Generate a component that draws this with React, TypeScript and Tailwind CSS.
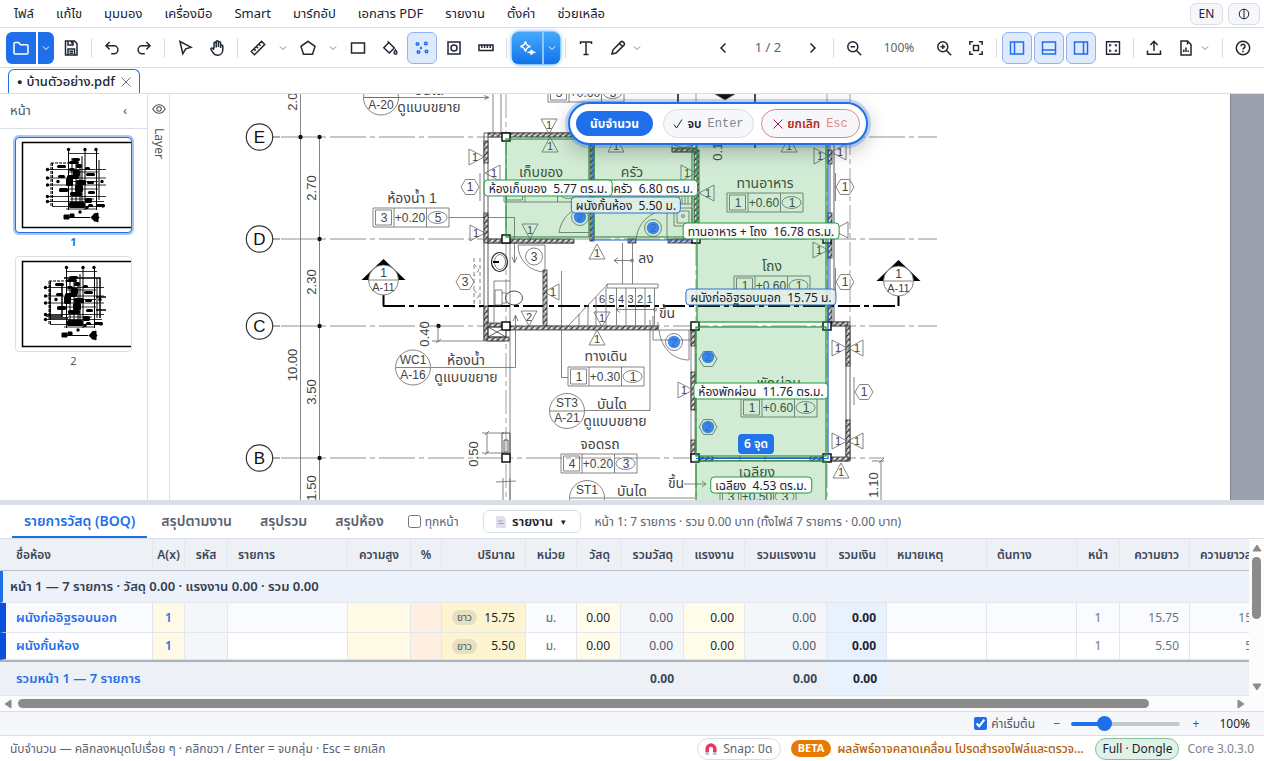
import { useState } from 'react';
import type { ReactNode } from 'react';
import clsx from 'clsx';

const MENU = ['ไฟล์', 'แก้ไข', 'มุมมอง', 'เครื่องมือ', 'Smart', 'มาร์กอัป', 'เอกสาร PDF', 'รายงาน', 'ตั้งค่า', 'ช่วยเหลือ'];

/* ---------- icons (18px grid) ---------- */

const ICONS: Record<string, ReactNode> = {
  folder: <path d="M2 14V4.5a1 1 0 0 1 1-1h3.6l1.8 2.2H15a1 1 0 0 1 1 1V14a1 1 0 0 1-1 1H3a1 1 0 0 1-1-1Z" />,
  save: <path d="M3.5 2h9L15 4.5V16H3.5ZM6 2v4h5V2M9.5 2.5v2M6 16v-6h6.5v6M7.5 12.2H11M7.5 14.2H11" />,
  undo: <path d="M6.6 10.5 3 6.8l3.6-3.7M3.2 6.8h7.7a4 4 0 0 1 0 8H8.2" />,
  redo: <path d="m11.4 10.5 3.6-3.7-3.6-3.7M14.8 6.8H7.1a4 4 0 0 0 0 8h2.7" />,
  cursor: <path d="m4 2.5 2.8 12.2 3-4.9 5.2-1.6Z" />,
  hand: (
    <path d="M6 9.5V4.2a1.1 1.1 0 0 1 2.2 0v4.300M8.200 8V2.900a1.100 1.100 0 0 1 2.200 0V8M10.400 8V3.800a1.100 1.100 0 0 1 2.200 0V9M12.600 7a1.100 1.100 0 0 1 2.200 0v3.500c0 3.300-2 5.700-5.100 5.700-2.500 0-3.700-1-4.900-2.900L3 10.400c-.5-1 .8-1.900 1.600-1.100L6 10.800" />
  ),
  ruler: <path d="M2.300 12.500 12.500 2.300l3.200 3.200L5.500 15.700ZM5 9.900l1.700 1.700M7.400 7.500l1.700 1.700M9.800 5.100l1.700 1.700" />,
  pentagon: <path d="M9 2.300 16 7.400 13.500 15.300H4.500L2 7.400Z" />,
  rect: <path d="M2.500 4h13v10h-13Z" />,
  paint: (
    <>
      <path d="m7.800 3.500 5.500 5.500-5 5-5.500-5.200ZM7.800 3.500 6.600 2.300" />
      <path d="M14.500 10.800c1 1.500 1.400 2.200 1.400 3a1.400 1.400 0 0 1-2.800 0c0-.8.400-1.500 1.400-3Z" />
    </>
  ),
  count: (
    <>
      <circle cx="4.500" cy="5" r="1.300" />
      <circle cx="12.800" cy="4.500" r="1.300" />
      <circle cx="8" cy="9" r=".5" />
      <circle cx="5.500" cy="13" r="1.300" />
      <circle cx="13.500" cy="12.500" r="1.300" />
    </>
  ),
  hole: (
    <>
      <path d="M3 3h12v12H3Z" />
      <circle cx="9" cy="9" r="3" />
    </>
  ),
  scale: <path d="M2 6h14v5.500H2ZM4.800 6v3M7.600 6v3M10.400 6v3M13.200 6v3" />,
  text: <path d="M3.500 5V3h11v2M9 3v12.500M6.500 15.500h5" />,
  pencil: <path d="m3 15 .9-4 8-8.100a1.500 1.500 0 0 1 2.100 0l1 1a1.500 1.500 0 0 1 0 2.200L7 14.100ZM10.500 4.500l3 3" />,
  prev: <path d="M11.500 4.500 7 9l4.500 4.500" />,
  next: <path d="M6.500 4.500 11 9l-4.500 4.500" />,
  zoomOut: (
    <>
      <circle cx="7.800" cy="7.800" r="5" />
      <path d="m11.500 11.500 4.700 4.700M5.500 7.800h4.600" />
    </>
  ),
  zoomIn: (
    <>
      <circle cx="7.800" cy="7.800" r="5" />
      <path d="m11.500 11.500 4.700 4.700M5.500 7.800h4.600M7.800 5.500v4.600" />
    </>
  ),
  fit: <path d="M2.800 6V2.800H6M12 2.800h3.200V6M15.200 12v3.200H12M6 15.200H2.800V12M6.500 6.500h5v5h-5Z" />,
  left: <path d="M2.500 3h13v12h-13ZM6.500 3v12" />,
  bottom: <path d="M2.500 3h13v12h-13ZM2.500 11h13" />,
  right: <path d="M2.500 3h13v12h-13ZM11.500 3v12" />,
  full: <path d="M2.500 2.800h13v12.400h-13ZM5.800 7.500V6h1.500M10.700 6h1.500v1.500M12.200 10.500V12h-1.500M7.300 12H5.800v-1.500" strokeWidth="1.400" />,
  upload: <path d="M9 12V2.500M5.300 6 9 2.300 12.700 6M2.500 11.500v3.700h13v-3.700" />,
  report: <path d="M4 2h6.500L14 5.500V16H4ZM10.500 2v3.500M6.800 13v-2.500M9 13V8.500M11.200 13v-1.500" />,
  help: (
    <>
      <circle cx="9" cy="9" r="6.700" />
      <path d="M7 7.300a2 2 0 1 1 3 1.700c-.7.400-1 .8-1 1.500M9 11.800v1.400" />
    </>
  ),
  sparkle: (
    <>
      <path d="M7.500 2.500c.6 3.200 1.500 4.300 5 5-3.500.8-4.400 1.800-5 5-.7-3.200-1.600-4.200-5-5 3.400-.7 4.300-1.800 5-5Z" />
      <path d="M13.500 10.800c.3 1.500.8 2 2.300 2.400-1.500.4-2 .9-2.300 2.400-.3-1.500-.8-2-2.300-2.400 1.500-.4 2-.9 2.300-2.400Z" fill="currentColor" />
    </>
  ),
};

function Icon({ name }: { name: string }) {
  return (
    <svg viewBox="0 0 18 18" className="size-[18px]" fill="none" stroke="currentColor" strokeWidth="1.500" aria-hidden="true">
      {ICONS[name]}
    </svg>
  );
}

function Tool({ name, label, active }: { name: string; label: string; active?: boolean }) {
  return (
    <button
      aria-label={label}
      aria-pressed={active}
      className={clsx(
        'flex h-8 w-[30px] shrink-0 items-center justify-center rounded-md border',
        active ? 'border-[#8db4f5] bg-[#dfe9fc] text-[#1f6feb]' : 'border-transparent text-[#1f2733]'
      )}
    >
      <Icon name={name} />
    </button>
  );
}

function Chevron({ label, start, className }: { label: string; start?: boolean; className?: string }) {
  return (
    <button
      aria-label={label}
      className={clsx('flex h-8 w-4 shrink-0 items-center', start ? '-ml-0.5 justify-start' : 'justify-center', className ?? 'text-[#7d8590]')}
    >
      <svg viewBox="0 0 8 8" className="size-2" fill="none" stroke="currentColor" strokeWidth="1">
        <path d="M1 2.500 4 5.500 7 2.500" />
      </svg>
    </button>
  );
}

const Sep = () => <div className="mx-[3px] h-5 w-px shrink-0 bg-[#d8dde3]" />;

/* ---------- floor plan ---------- */

type Dir = 'up' | 'down' | 'left' | 'right';
const TRI: Record<Dir, string> = {
  up: 'M0 -9 8 6H-8Z',
  down: 'M0 9 8 -6H-8Z',
  left: 'M-9 0 6 -8V8Z',
  right: 'M9 0 -6 -8V8Z',
};

const TAGS: [number, number, Dir, string?][] = [
  [475, 157, 'right'], [476, 233, 'right'], [494, 173, 'left'], [530, 230, 'down'], [549, 125, 'down'],
  [550, 146, 'up'], [616, 146, 'up'], [687, 173, 'right'], [708, 193, 'left'], [820, 156, 'right'],
  [840, 152, 'left'], [789, 146, 'up'], [819, 250, 'right'], [842, 230, 'left', ''], [597, 339, 'up'],
  [602, 318, 'down'], [553, 292, 'left'], [597, 253, 'up'], [529, 317, 'down', '2'], [684, 390, 'right'],
  [838, 348, 'right'], [857, 348, 'left'], [838, 441, 'right'], [857, 441, 'left'], [841, 472, 'up'],
];

const HEXES: [number, number, string][] = [
  [470, 187, '1'], [465, 282, '3'], [845, 187, '1'], [845, 282, '1'], [864, 392, '1'], [708, 359, ''], [708, 427, ''],
];

const SPECS: [number, number, string, string, string][] = [
  [373, 208, '3', '+0.20', '5'], [727, 193, '1', '+0.60', '1'], [734, 276, '1', '+0.60', '1'],
  [568, 367, '1', '+0.30', '1'], [561, 454, '4', '+0.20', '3'], [741, 398, '1', '+0.60', '1'],
  [720, 487, '3', '+0.50', '3'], [548, 83, '3', '+0.60', '3'], [504, 183, '', '', ''], [600, 183, '', '', ''],
];

const NAMES: [number, number, string][] = [
  [429, 112, 'ดูแบบขยาย'], [429, 95, 'บันได'], [412, 203, 'ห้องน้ำ 1'], [541, 177, 'เก็บของ'], [632, 177, 'ครัว'],
  [765, 188, 'ทานอาหาร'], [772, 271, 'โถง'], [606, 361, 'ทางเดิน'], [612, 409, 'บันได'], [615, 426, 'ดูแบบขยาย'],
  [600, 449, 'จอดรถ'], [632, 496, 'บันได'], [757, 477, 'เฉลียง'], [676, 488, 'ขึ้น'], [667, 318, 'ขึ้น'],
  [646, 263, 'ลง'], [779, 388, 'พักผ่อน'], [466, 365, 'ห้องน้ำ'], [466, 382, 'ดูแบบขยาย'],
];

const DIMS: [number, number, string][] = [
  [293, 98, '2.00'], [312, 188, '2.70'], [312, 282, '2.30'], [293, 365, '10.00'], [312, 392, '3.50'],
  [312, 488, '1.50'], [425, 334, '0.40'], [474, 454, '0.50'], [874, 485, '1.10'], [718, 148, '0.10'],
];

// x, y, width, height of hatched masonry
const WALLS: [number, number, number, number][] = [
  [488, 133, 208, 4], [484, 141, 4, 22], [484, 213, 4, 30], [488, 239, 86, 4], [590, 137, 4, 104],
  [628, 239, 8, 4], [668, 239, 30, 4], [694, 150, 5, 90], [543, 270, 4, 58], [507, 326, 151, 4],
  [484, 306, 4, 34], [487, 323, 22, 4], [487, 337, 22, 4], [691, 330, 4, 16], [691, 372, 4, 38],
  [691, 440, 4, 18], [828, 150, 4, 14], [828, 213, 4, 45], [828, 306, 4, 20], [832, 322, 16, 4],
  [846, 326, 4, 40], [846, 420, 4, 40], [832, 457, 16, 4], [699, 457, 14, 4], [810, 457, 16, 4], [681, 133, 17, 4], [672, 148, 24, 4],
];

const COLUMNS: [number, number][] = [
  [506, 137], [506, 239], [506, 326], [506, 458], [695, 326], [827, 326], [695, 458], [827, 458], [827, 239], [696, 239],
];

const ROOMS: [number, number, number, number][] = [
  [506, 139, 83, 98], [594, 139, 98, 98], [697, 139, 129, 183], [696, 327, 130, 129], [696, 461, 130, 50],
];

const COUNTS: [number, number][] = [[580, 217], [653, 228], [674, 342], [708, 357], [708, 427]];

function DetailBubble({ x, y, top, bottom }: { x: number; y: number; top: string; bottom: string }) {
  return (
    <g>
      <circle cx={x} cy={y} r="17.500" fill="none" />
      <path d={`M${x - 17} ${y}h34`} />
      <text x={x} y={y - 4} fontSize="12">{top}</text>
      <text x={x} y={y + 11} fontSize="12">{bottom}</text>
    </g>
  );
}

function SectionMark({ x, y }: { x: number; y: number }) {
  return (
    <g>
      <path d={`M${x} ${y - 21}l22 21h-44Z`} fill="#000" stroke="none" />
      <circle cx={x} cy={y} r="15" fill="#fff" />
      <path d={`M${x - 15} ${y}h30`} />
      <text x={x} y={y - 3} fontSize="12">1</text>
      <text x={x} y={y + 11} fontSize="11">A-11</text>
    </g>
  );
}

function FloorPlan() {
  return (
    <svg
      viewBox="170 94 1061 406"
      width="1061"
      height="406"
      className="block shrink-0 [&_text]:fill-[#444] [&_text]:stroke-none"
      fill="none"
      stroke="#666"
      strokeWidth="0.800"
      textAnchor="middle"
      fontFamily='"Liberation Sans", "Noto Sans Thai", sans-serif'
      aria-label="แปลนพื้น"
    >
      <defs>
        <pattern id="hatch" width="4" height="4" patternUnits="userSpaceOnUse" patternTransform="rotate(45)">
          <rect width="4" height="4" fill="#e6e6e6" />
          <path d="M0 0v4" stroke="#333" strokeWidth="2" />
        </pattern>
      </defs>

      {/* grid lines */}
      {[137, 239, 326, 458].map((y) => (
        <path key={y} d={`M281 ${y}H${y === 458 ? 884 : 937}`} strokeDasharray="36 4 5 4" stroke="#777" />
      ))}
      <path d="M506 94V500M696 94V500M827 94V500M850 94V322" strokeDasharray="24 4 5 4" stroke="#888" />
      <path d="M300.500 94V500M319.500 137V500M510 243V500M493 94V133M501 94V133" />
      {[[300, 137], [319, 137], [319, 239], [319, 326], [319, 458], [438, 326]].map(([x, y]) => (
        <circle key={`${x}-${y}`} cx={x + 0.5} cy={y} r="2.200" fill="#111" stroke="none" />
      ))}
      {[['E', 137], ['D', 239], ['C', 326], ['B', 458]].map(([name, y]) => (
        <g key={name}>
          <circle cx="259.500" cy={y} r="13.200" stroke="#333" strokeWidth="1.200" />
          <path d={`M273 ${y}h7`} stroke="#333" />
          <text x="259.500" y={Number(y) + 6} fontSize="17" className="fill-[#111]!">{name}</text>
        </g>
      ))}
      {DIMS.map(([x, y, t]) => (
        <text key={`${x}-${y}`} x={x} y={y} fontSize="13" transform={`rotate(-90 ${x} ${y})`} dy="4">{t}</text>
      ))}

      {/* leaders and dimension ticks */}
      <path d="M364 97.500H488M484 95.500l5 2-5 2M449 217.500h65.500V262M512 257l2.500 6 2.500-6M431 367.500h84.500V316M513 321l2.500-6 2.500 6" />
      <path d="M585 410.500h65V320M605 498h90M568 377.500h-6.500V271M684 484h22M702 481l4 3-4 3" />
      <path d="M438 326v16M432 341h74M436 343l5-4M487 433v20M482 433h22M482 453h22M485 435l4-4M485 455l4-4M503 478v22M510 478v22M496 482l20-1M881 461v40M872 461h12M879 463l5-5" />
      <path d="M655 309.500H616l4-3M616 309.500l4 3M632 260.500H614l4-3M614 260.500l4 3M622.500 243v41M632.500 243v41" />
      <circle cx="655" cy="309.500" r="1.500" />
      <circle cx="632" cy="260.500" r="1.500" />

      {/* thick section line */}
      <path d="M383.500 295V306M898.500 295V306" stroke="#000" strokeWidth="2" />
      <path d="M383 306H899" stroke="#000" strokeWidth="2" strokeDasharray="22 4 5 4" />

      {/* wall outlines */}
      <path d="M484 133V341M488 137V323M484 133H698M488 243H574M830 145V322M834 145V322M846 326V461M850 322V461M832 322H850M830 461H850" stroke="#333" />
      <path d="M691 330V458M695 330V458M658 322V330M713 457.500H810M713 460.500H810M740 456v5M765 456v5" />
      {WALLS.map(([x, y, w, h]) => (
        <rect key={`${x}-${y}`} x={x} y={y} width={w} height={h} fill="url(#hatch)" stroke="#333" />
      ))}
      <path d="M488 327h18v10h-18ZM488 327l18 10M506 327l-18 10M502 433h8v20h-8ZM504 440h4v12h-4Z" stroke="#333" />

      {/* doors and windows */}
      <path d="M559 232.500A32 32 0 0 1 589 205M559 232.500h30M636 240A32 32 0 0 1 667 210V240M518 245h27v27A27 27 0 0 1 518 245" />
      <path d="M659 330c2 18 14 30 30 30V330M659 330h32M653 316v24h38" />
      <path d="M480 173v28M835.500 173v28M835.500 268v28M854 377v28" />
      <path d="M474 258v50M480 258v50M474 264l5 6-5 6M474 290l5 6-5 6" strokeDasharray="4 3" />
      <circle cx="534" cy="256.500" r="8.500" />
      <text x="534" y="261" fontSize="12">3</text>
      {COUNTS.slice(0, 3).map(([x, y]) => <circle key={x} cx={x} cy={y} r="8.500" />)}

      {/* sanitary fixtures */}
      <ellipse cx="499.500" cy="262" rx="8" ry="9.500" stroke="#222" strokeWidth="1.200" />
      <ellipse cx="500" cy="262" rx="5.500" ry="7.500" />
      <path d="M493 262h6" stroke="#000" strokeWidth="2" />
      <path d="M495 290h7v15h-7ZM502 293h5M502 303h5M494 281v42M494 281h16" />
      <ellipse cx="514" cy="298" rx="8.500" ry="7" stroke="#222" />
      <path d="M674 208h18v18h-18ZM677 211h12v12h-12ZM676 192h16v12h-16M679 192v12M682 192v12M685 192v12M688 192v12M672 152h24v-8h-24ZM672 152l24-8M672 144l24 8" />
      <circle cx="683" cy="216" r="1.500" />

      {/* stairs */}
      <path d="M607 284h51v4h-51ZM568 326 608 284M606 288V325M616.500 288V325M626 288V325M635.500 288V325M645 288V325M654.500 288V325M596 297V325M588 305V325M579 314V325" />
      {[6, 5, 4, 3, 2, 1].map((n, i) => (
        <text key={n} x={602 + i * 9.500} y="303" fontSize="11">{n}</text>
      ))}

      {/* strokes coming in from the upper part of the sheet */}
      <path d="M678 94v40M755 94v54" stroke="#111" strokeWidth="1.500" />
      <path d="M715 94l20 0-10 6Z" fill="#111" />

      {COLUMNS.map(([x, y]) => (
        <rect key={`${x}-${y}`} x={x - 4} y={y - 4} width="8" height="8" fill="#fff" stroke="#111" strokeWidth="1.500" />
      ))}

      {SPECS.map(([x, y, a, b, c]) => (
        <g key={`${x}-${y}`}>
          <path d={`M${x} ${y}h76v19h-76ZM${x + 2.500} ${y + 2}h16v15h-16ZM${x + 21} ${y}v19M${x + 53.500} ${y}v19`} />
          <ellipse cx={x + 64.500} cy={y + 9.500} rx="9.500" ry="6" />
          {b && (
            <>
              <text x={x + 11} y={y + 14} fontSize="12">{a}</text>
              <text x={x + 37} y={y + 14} fontSize="12">{b}</text>
              <text x={x + 65} y={y + 14} fontSize="12">{c}</text>
            </>
          )}
        </g>
      ))}
      {TAGS.map(([x, y, dir, n = '1']) => (
        <g key={`${x}-${y}`} transform={`translate(${x} ${y})`}>
          <path d={TRI[dir]} />
          {n && <text y="4" fontSize="11">{n}</text>}
        </g>
      ))}
      {HEXES.map(([x, y, n]) => (
        <g key={`${x}-${y}`} transform={`translate(${x} ${y})`}>
          <path d="M-9 0-4.500-7.500h9L9 0 4.500 7.500h-9Z" />
          {n && <text y="4" fontSize="12">{n}</text>}
        </g>
      ))}

      <DetailBubble x={381} y={97.500} top="ST2" bottom="A-20" />
      <DetailBubble x={413} y={367.500} top="WC1" bottom="A-16" />
      <DetailBubble x={567} y={411} top="ST3" bottom="A-21" />
      <DetailBubble x={587} y={498} top="ST1" bottom="A-19" />
      <SectionMark x={383.500} y={280} />
      <SectionMark x={898.500} y={281} />

      {NAMES.map(([x, y, t]) => (
        <text key={`${x}-${y}`} x={x} y={y} fontSize="14">{t}</text>
      ))}

      {/* measured areas, walls and counted points */}
      {ROOMS.map(([x, y, w, h]) => (
        <rect key={`${x}-${y}`} x={x} y={y} width={w} height={h} fill="#1a9b2e" fillOpacity="0.200" stroke="#1f9a3a" strokeWidth="1.200" />
      ))}
      <path d="M592 137V240H692M828 145V458.500H696" stroke="#1f5fd8" strokeWidth="1.200" />
      {COUNTS.map(([x, y]) => (
        <g key={x + y}>
          <text x={x} y={y + 4} fontSize="11">2</text>
          <circle cx={x} cy={y} r="6.200" fill="#2374e8" fillOpacity="0.850" stroke="none" />
        </g>
      ))}
    </svg>
  );
}

const LABELS = [
  { x: 473, y: 94, tone: 'green', text: 'ห้องครัว  6.80 ตร.ม.' },
  { x: 378, y: 94, tone: 'green', text: 'ห้องเก็บของ  5.77 ตร.ม.' },
  { x: 456, y: 111, tone: 'blue', text: 'ผนังกั้นห้อง  5.50 ม.' },
  { x: 591, y: 137, tone: 'green', text: 'ทานอาหาร + โถง  16.78 ตร.ม.' },
  { x: 591, y: 203, tone: 'blue', text: 'ผนังก่ออิฐรอบนอก  15.75 ม.' },
  { x: 591, y: 297, tone: 'green', text: 'ห้องพักผ่อน  11.76 ตร.ม.' },
  { x: 591, y: 391, tone: 'green', text: 'เฉลียง  4.53 ตร.ม.' },
];

function Canvas() {
  return (
    <div className="relative min-w-0 flex-1 overflow-hidden bg-[#9aa1ac]">
      <div className="w-[1061px] border-r border-[#7f8691] bg-white">
        <FloorPlan />
      </div>
      {LABELS.map((l) => (
        <span
          key={l.text}
          className={clsx(
            'absolute flex h-[17px] -translate-x-1/2 -translate-y-1/2 items-center rounded border px-1 text-xs whitespace-pre text-[#1b2230]',
            l.tone === 'green' ? 'border-[#1f9a3a] bg-white/95' : 'border-[#2f6fd6] bg-[#e3f0e8]/90'
          )}
          style={{ left: l.x, top: l.y }}
        >
          {l.text}
        </span>
      ))}
      <span className="absolute top-[340px] left-[568px] flex h-5 items-center rounded-sm bg-[#2374e8] px-1.5 text-xs font-semibold text-white">6 จุด</span>

      <div className="absolute top-2 left-[398px] flex h-[43px] items-center gap-2 rounded-full border-2 border-[#1f6feb] bg-white px-1.5 text-xs shadow-[0_0_0_3px_rgba(31,111,235,0.25),0_6px_20px_rgba(0,0,0,0.25)]">
        <span className="mr-0.5 flex h-[25px] w-[77px] items-center justify-center rounded-full bg-[#1f6feb] font-bold whitespace-nowrap text-white">นับจำนวน</span>
        <button className="flex h-[29px] w-[91px] items-center justify-center gap-1 rounded-full border border-[#d8dde3] bg-[#f5f7fa] font-semibold whitespace-nowrap text-[#1b2230]">
          <svg viewBox="0 0 10 10" className="size-2.5" fill="none" stroke="currentColor"><path d="m1 5.500 2.500 3.500L9 .5" /></svg>
          จบ <kbd className="ml-0.5 font-['Liberation_Mono',monospace] text-xs font-normal text-[#7d8590]">Enter</kbd>
        </button>
        <button className="-ml-px flex h-[29px] w-[99px] items-center justify-center gap-1 rounded-full border border-[#d98a87] bg-[#f5f7fa] font-semibold whitespace-nowrap text-[#b3261e]">
          <svg viewBox="0 0 10 10" className="size-2.5" fill="none" stroke="#c2185b"><path d="m.5.500 9 9M9.500.500l-9 9" /></svg>
          ยกเลิก <kbd className="ml-0.5 font-['Liberation_Mono',monospace] text-xs font-normal text-[#e08a80]">Esc</kbd>
        </button>
      </div>
    </div>
  );
}

/* ---------- page thumbnails ---------- */

const BLOBS: [number, number, number, number][] = [
  [53, 23, 10, 3], [56, 20, 8, 3], [60, 26, 6, 4], [57, 32, 7, 6], [41, 27, 9, 3], [51, 37, 12, 4], [70, 35, 9, 3],
  [50, 40, 7, 8], [60, 42, 10, 5], [71, 43, 7, 3], [42, 37, 7, 3], [43, 50, 9, 4], [59, 47, 8, 7], [72, 53, 7, 3], [53, 64, 16, 6],
  [69, 60, 7, 5], [69, 29, 5, 3], [72, 66, 5, 3], [80, 66, 9, 3], [54, 54, 12, 4], [53, 30, 6, 3],
];

const NODES: [number, number][] = [
  [52.5, 11.5], [69, 11.5], [80, 11.5], [31.5, 31.5], [31.5, 40], [31.5, 47], [31.5, 58.5], [31.5, 63.5],
  [86, 43.5], [42, 43.5], [64, 74], [71, 69.5], [87, 68],
];

function Thumb({ page }: { page: number }) {
  return (
    <svg viewBox="0 0 115 94" className="block h-[94px] w-full" preserveAspectRatio="xMinYMin slice" aria-hidden="true">
      <path d="M115 4.500H6.500v85H115" fill="none" stroke="#000" strokeWidth="1.500" />
      <g transform={page === 1 ? undefined : 'translate(-2 -1)'} stroke="#000" fill="none">
        <path d="M52.500 12v60M69 12v60M80.500 12v60M56 20v50M60 20v50M64 26v44M83 22v40M66 18v50" />
        <path d="M31 31.500H90M31 40H90M31 47H90M31 58.500H90M31 63.500H88M52 15.500H83M36 68.500H86M52 34h30M50 51h32M52 43.500h30M54 61h24M50 71h30" strokeWidth="0.800" />
        <path d="M36.500 25v44M35 25h20M35 25v44" strokeDasharray="3 1" />
        {page === 2 && <path d="M36 27v35h18M48 27v34M32 60h16M50 22h36v40M82 41h10M82 54h10" strokeWidth="1.500" />}
        {BLOBS.map(([x, y, w, h]) => (
          <rect key={`${x}-${y}`} x={x} y={y} width={w} height={h} rx="1.500" fill="#000" stroke="none" />
        ))}
        <path d="M50 79.500h24" />
        <path d="M48 77h5v4h-5ZM54 76h4v3h-4Z" fill="#000" />
        {NODES.map(([x, y]) => (
          <circle key={`${x}-${y}`} cx={x} cy={y} r="1.700" fill="#000" stroke="none" />
        ))}
        <path d="M78 76l4-1 0 9-4-2Zm-3 3.500 4-4 4 4-4 4Z" fill="#000" strokeWidth="1" />
      </g>
    </svg>
  );
}

/* ---------- BOQ table ---------- */

const COLS: { w: number; name: string; cls: string; head?: string }[] = [
  { w: 153, name: 'ชื่อห้อง', cls: 'text-left pl-4' },
  { w: 32, name: 'A(x)', cls: 'text-center' },
  { w: 43, name: 'รหัส', cls: 'text-center' },
  { w: 120, name: 'รายการ', cls: 'text-left px-2.5' },
  { w: 63, name: 'ความสูง', cls: 'text-center' },
  { w: 31, name: '%', cls: 'text-center' },
  { w: 84, name: 'ปริมาณ', cls: 'text-right pr-2.5' },
  { w: 51, name: 'หน่วย', cls: 'text-center' },
  { w: 44, name: 'วัสดุ', cls: 'text-right pr-2.5' },
  { w: 63, name: 'รวมวัสดุ', cls: 'text-right pr-2.5' },
  { w: 61, name: 'แรงงาน', cls: 'text-right pr-2.5' },
  { w: 82, name: 'รวมแรงงาน', cls: 'text-right pr-2.5' },
  { w: 60, name: 'รวมเงิน', cls: 'text-right pr-2.5' },
  { w: 100, name: 'หมายเหตุ', cls: 'text-left px-2.5' },
  { w: 90, name: 'ต้นทาง', cls: 'text-left px-2.5' },
  { w: 43, name: 'หน้า', cls: 'text-center' },
  { w: 70, name: 'ความยาว', cls: 'text-right pr-2.5' },
  { w: 80, name: 'ความยาวสุทธิ', cls: 'text-left pl-2.5' },
];

const ROWS = [
  { name: 'ผนังก่ออิฐรอบนอก', qty: '15.75' },
  { name: 'ผนังกั้นห้อง', qty: '5.50' },
];

function BoqTable() {
  const cell = 'border-r border-b border-[#e3e7ed] overflow-hidden';
  return (
    <table className="w-[1270px] table-fixed border-separate border-spacing-0 text-xs whitespace-nowrap">
      <colgroup>
        {COLS.map((c) => <col key={c.name} style={{ width: c.w }} />)}
      </colgroup>
      <thead>
        <tr className="h-8 bg-[#edf0f5] text-[#3b4656]">
          {COLS.map((c) => (
            <th key={c.name} className={clsx('overflow-hidden border-r border-b border-r-[#e3e7ed] border-b-[#b9c0c9] font-semibold', c.cls)}>{c.name}</th>
          ))}
        </tr>
      </thead>
      <tbody>
        <tr className="h-8">
          <td colSpan={18} className="border-b border-l-3 border-b-[#e3e7ed] border-l-[#1f6feb] bg-[#edf1fa] pl-[7px] text-[13px] font-semibold text-[#333e4e]">
            หน้า 1 — 7 รายการ · วัสดุ 0.00 · แรงงาน 0.00 · รวม 0.00
          </td>
        </tr>
        {ROWS.map((r, i) => (
          <tr key={r.name} className={i ? 'h-[27px] bg-white' : 'h-[30px] bg-[#fafbfe]'}>
            <td className={clsx(cell, 'border-l-6 border-l-[#0a4fdc] pl-2.5 text-[13px] font-semibold text-[#1f6feb]')}>{r.name}</td>
            <td className={clsx(cell, 'bg-[#fffae6] text-center font-semibold text-[#1f6feb]')}>1</td>
            <td className={clsx(cell, 'bg-[#f4f6fa]')} />
            <td className={cell} />
            <td className={clsx(cell, 'bg-[#fffae6]')} />
            <td className={clsx(cell, 'bg-[#ffefe2]')} />
            <td className={clsx(cell, 'bg-[#fdf5cf] pr-2.5 text-right text-[#1b2230]')}>
              <span className="flex items-center justify-between pl-2.5">
                <span className="rounded-full bg-[#e6e0c0] px-[5px] text-[10px] leading-[15px] text-[#4c5666]">ยาว</span>
                {r.qty}
              </span>
            </td>
            <td className={clsx(cell, 'text-center text-[#5a6473]')}>ม.</td>
            <td className={clsx(cell, 'bg-[#fffcec] pr-2.5 text-right text-[#1b2230]')}>0.00</td>
            <td className={clsx(cell, 'bg-[#f4f6fa] pr-2.5 text-right text-[#4c5666]')}>0.00</td>
            <td className={clsx(cell, 'bg-[#fffcec] pr-2.5 text-right text-[#1b2230]')}>0.00</td>
            <td className={clsx(cell, 'bg-[#f4f6fa] pr-2.5 text-right text-[#4c5666]')}>0.00</td>
            <td className={clsx(cell, 'bg-[#e8f1fe] pr-2.5 text-right font-bold text-[#1b2230]')}>0.00</td>
            <td className={cell} />
            <td className={cell} />
            <td className={clsx(cell, 'text-center text-[#6b7480]')}>1</td>
            <td className={clsx(cell, 'pr-2.5 text-right text-[#6b7480]')}>{r.qty}</td>
            <td className={clsx(cell, 'pr-0 text-right text-[#6b7480]')}>{r.qty}</td>
          </tr>
        ))}
      </tbody>
      <tfoot>
        <tr className="h-9 bg-[#edf0f5] font-bold text-[#3b4656] [&>td]:border-t-2 [&>td]:border-b [&>td]:border-t-[#aab3bd] [&>td]:border-b-[#e3e7ed]">
          <td colSpan={9} className="pl-4 text-[13px] font-semibold text-[#1f6feb]">รวมหน้า 1 — 7 รายการ</td>
          <td className="pr-2.5 text-right">0.00</td>
          <td />
          <td className="pr-2.5 text-right">0.00</td>
          <td className="bg-[#e8f1fe] pr-2.5 text-right text-[#1b2230]">0.00</td>
          <td colSpan={5} />
        </tr>
      </tfoot>
    </table>
  );
}

function Arrow({ d }: { d: string }) {
  return (
    <svg viewBox="0 0 10 10" className="size-2.5 shrink-0" fill="#8b8b8b" stroke="#8b8b8b" strokeLinejoin="round" aria-hidden="true">
      <path d={d} />
    </svg>
  );
}

const MIN_ZOOM = 70;
const MAX_ZOOM = 180;

export default function App() {
  const [allPages, setAllPages] = useState(false);
  const [defaults, setDefaults] = useState(true);
  const [zoom, setZoom] = useState(100);
  const filled = ((zoom - MIN_ZOOM) / (MAX_ZOOM - MIN_ZOOM)) * 100;

  return (
    <main className="flex h-screen flex-col overflow-hidden bg-white font-['Noto_Sans','Noto_Sans_Thai',sans-serif] text-[#1b2230]">
      <header className="flex h-7 shrink-0 items-center border-b border-[#dadfe5] pr-1 pl-1 text-xs">
        <nav className="flex flex-1 gap-0.5 text-[13px]">
          {MENU.map((m) => <button key={m} className="px-2.5 whitespace-nowrap">{m}</button>)}
        </nav>
        <button className="mr-[5px] h-[22px] w-[33px] rounded-md border border-[#dadfe5] bg-[#f5f7fa]">EN</button>
        <button aria-label="ธีม" className="flex h-[22px] w-8 items-center justify-center rounded-md border border-[#dadfe5] bg-[#f5f7fa]">
          <svg viewBox="0 0 12 12" className="size-3" fill="none" stroke="currentColor"><circle cx="6" cy="6" r="4.800" /><path d="M6 1v10" /></svg>
        </button>
      </header>

      <div className="flex h-10 shrink-0 items-center gap-0.5 border-b border-[#dadfe5] px-1.5">
        <button aria-label="เปิด" className="flex h-8 w-[30px] shrink-0 items-center justify-center rounded-l-md bg-[#1f6feb] text-white"><Icon name="folder" /></button>
        <Chevron label="เปิดล่าสุด" className="rounded-r-md bg-[#1f6feb] text-white" />
        <Tool name="save" label="บันทึก" />
        <Sep />
        <Tool name="undo" label="เลิกทำ" />
        <Tool name="redo" label="ทำซ้ำ" />
        <Sep />
        <Tool name="cursor" label="เลือก" />
        <Tool name="hand" label="เลื่อน" />
        <Sep />
        <Tool name="ruler" label="วัดระยะ" />
        <Chevron label="ตัวเลือกวัดระยะ" />
        <Tool name="pentagon" label="วัดพื้นที่" />
        <Chevron label="ตัวเลือกวัดพื้นที่" />
        <Tool name="rect" label="สี่เหลี่ยม" />
        <Tool name="paint" label="เติมพื้นที่" />
        <Tool name="count" label="นับ" active />
        <Tool name="hole" label="ช่องเปิด" />
        <Tool name="scale" label="มาตราส่วน" />
        <Sep />
        <div className="flex shrink-0 gap-0.5 rounded-lg bg-[#8cc8fb] shadow-[0_0_0_1px_#8cc8fb,0_0_5px_#4da3ff]">
          <button aria-label="Smart" className="flex h-8 w-[30px] items-center justify-center rounded-l-md bg-linear-to-b from-[#45a9fb] to-[#1272ea] text-white"><Icon name="sparkle" /></button>
          <Chevron label="Smart เพิ่มเติม" className="rounded-r-md bg-linear-to-b from-[#45a9fb] to-[#1272ea] text-white" />
        </div>
        <Sep />
        <Tool name="text" label="ข้อความ" />
        <Tool name="pencil" label="วาด" />
        <Chevron label="ตัวเลือกวาด" start />
        <div className="flex-1" />
        <Tool name="prev" label="หน้าก่อน" />
        <span className="w-14 shrink-0 text-center text-[13px] text-[#5a6473]">1 / 2</span>
        <Tool name="next" label="หน้าถัดไป" />
        <Sep />
        <Tool name="zoomOut" label="ย่อ" />
        <span className="w-14 shrink-0 text-center text-xs text-[#5a6473]">100%</span>
        <Tool name="zoomIn" label="ขยาย" />
        <Tool name="fit" label="พอดีหน้า" />
        <Sep />
        <Tool name="left" label="แผงซ้าย" active />
        <Tool name="bottom" label="แผงล่าง" active />
        <Tool name="right" label="แผงขวา" active />
        <Tool name="full" label="เต็มจอ" />
        <Sep />
        <Tool name="upload" label="ส่งออก" />
        <Tool name="report" label="รายงาน" />
        <Chevron label="ตัวเลือกรายงาน" start />
        <Sep />
        <Tool name="help" label="ช่วยเหลือ" />
      </div>

      <div className="flex h-[26px] shrink-0 items-end border-b border-[#dadfe5] pl-2">
        <div className="flex h-6 items-center gap-1.5 rounded-t-md border border-b-0 border-[#1f6feb] px-2 text-[13px] font-medium whitespace-nowrap">
          <span className="flex items-center gap-1"><span className="text-[9px]">●</span>บ้านตัวอย่าง.pdf</span>
          <button aria-label="ปิด" className="text-[#6b7480]">
            <svg viewBox="0 0 10 10" className="size-2.5" fill="none" stroke="currentColor"><path d="m.500.500 9 9M9.500.500l-9 9" /></svg>
          </button>
        </div>
      </div>

      <div className="flex min-h-0 flex-1">
        <aside className="flex w-[148px] shrink-0 flex-col border-r border-[#dadfe5]">
          <div className="flex h-[35px] shrink-0 items-center justify-between border-b border-[#dadfe5] px-2.5 text-[13px] text-[#4c5666]">
            หน้า
            <button aria-label="ยุบ" className="w-6 text-center">‹</button>
          </div>
          <div className="flex flex-col items-center pt-2 text-[11px] leading-4 text-[#4c5666]">
            <button className="w-[117px] overflow-hidden rounded-sm border border-[#1f6feb] bg-white shadow-[0_0_0_2px_#a9c6f8]"><Thumb page={1} /></button>
            <span className="mt-px font-bold text-[#1f6feb]">1</span>
            <button className="mt-1.5 w-[117px] overflow-hidden rounded-sm border border-[#dadfe5] bg-white"><Thumb page={2} /></button>
            <span className="mt-px">2</span>
          </div>
        </aside>
        <aside className="flex w-[22px] shrink-0 flex-col items-center border-r border-[#dadfe5] pt-2 text-[#4c5666]">
          <svg viewBox="0 0 14 14" className="size-3.5" fill="none" stroke="currentColor" strokeWidth="1.100">
            <path d="M.8 7C2.500 4 4.500 2.700 7 2.700S11.500 4 13.200 7C11.500 10 9.500 11.300 7 11.300S2.500 10 .8 7Z" />
            <circle cx="7" cy="7" r="2.200" />
          </svg>
          <span className="mt-3 text-xs leading-4 [writing-mode:vertical-rl]">Layer</span>
        </aside>
        <Canvas />
      </div>

      <div className="h-[5px] shrink-0 bg-[#dadfe5]" />

      <section className="shrink-0">
        <div className="flex h-[34px] items-center border-b border-[#dadfe5] px-3 text-[13px] whitespace-nowrap text-[#5a6473]">
          <div className="flex h-full text-sm font-semibold" role="tablist">
            {['รายการวัสดุ (BOQ)', 'สรุปตามงาน', 'สรุปรวม', 'สรุปห้อง'].map((t, i) => (
              <button key={t} role="tab" aria-selected={i === 0} className={clsx('border-b-2', i === 0 ? 'border-[#1f6feb] px-3 text-[#1f6feb]' : 'border-transparent px-3.5')}>{t}</button>
            ))}
          </div>
          <label className="ml-2.5 flex items-center gap-1 text-xs">
            <input type="checkbox" checked={allPages} onChange={(e) => setAllPages(e.target.checked)} className="size-[13px]" />
            ทุกหน้า
          </label>
          <button className="ml-6 flex h-[23px] w-[98px] items-center justify-center gap-1.5 rounded-md border border-[#dadfe5] bg-white text-[13px] font-semibold text-[#1b2230]">
            <svg viewBox="0 0 10 12" className="h-3 w-2.5"><path d="M0 0h7l3 3v9H0Z" fill="#e3dcf0" /><path d="M2 5h5M2 7.500h6" stroke="#a79fbb" /></svg>
            รายงาน
            <span className="text-[8px]">▼</span>
          </button>
          <span className="ml-3.5 text-xs">หน้า 1: 7 รายการ · รวม 0.00 บาท (ทั้งไฟล์ 7 รายการ · 0.00 บาท)</span>
        </div>

        <div className="flex">
          <div className="min-w-0 flex-1 overflow-hidden"><BoqTable /></div>
          <div className="flex w-[15px] shrink-0 flex-col items-center bg-[#fcfcfc] py-1">
            <Arrow d="M5 2 9 8H1Z" />
            <div className="mt-1 h-[62px] w-[9px] rounded-full bg-[#8b8b8b]" />
            <div className="flex-1" />
            <Arrow d="M5 8 9 2H1Z" />
          </div>
        </div>
        <div className="flex h-[15px] items-center bg-[#fcfcfc] pr-[18px] pl-[3px]">
          <Arrow d="M2 5 8 1V9Z" />
          <div className="ml-[5px] h-[9px] w-[91%] rounded-full bg-[#8b8b8b]" />
          <div className="flex-1" />
          <Arrow d="M8 5 2 1V9Z" />
        </div>
      </section>

      <div className="flex h-[25px] shrink-0 items-center justify-end border-y border-[#dadfe5] bg-[#f5f7fa] pr-3.5 text-xs text-[#4c5666]">
        <label className="flex items-center gap-1">
          <input type="checkbox" checked={defaults} onChange={(e) => setDefaults(e.target.checked)} className="size-[13px] accent-[#1f6feb]" />
          ค่าเริ่มต้น
        </label>
        <button aria-label="ย่อ" className="ml-4 w-3">−</button>
        <input
          type="range"
          aria-label="ซูมตาราง"
          min={MIN_ZOOM}
          max={MAX_ZOOM}
          value={zoom}
          onChange={(e) => setZoom(Number(e.target.value))}
          className="mr-2.5 ml-2 h-1 w-[109px] appearance-none rounded-full [&::-webkit-slider-thumb]:size-[15px] [&::-webkit-slider-thumb]:appearance-none [&::-webkit-slider-thumb]:rounded-full [&::-webkit-slider-thumb]:bg-[#1f6feb]"
          style={{ background: `linear-gradient(to right, #1f6feb ${filled}%, #c3c8cf ${filled}%)` }}
        />
        <button aria-label="ขยาย" className="w-3">+</button>
        <span className="w-12 text-right text-[#1b2230]">{zoom}%</span>
      </div>

      <footer className="flex h-[25px] shrink-0 items-center pr-2.5 pl-2.5 text-xs whitespace-nowrap text-[#5a6473]">
        <span className="flex-1">นับจำนวน — คลิกลงหมุดไปเรื่อย ๆ · คลิกขวา / Enter = จบกลุ่ม · Esc = ยกเลิก</span>
        <button className="flex h-[22px] w-[84px] items-center justify-center gap-1.5 rounded-full border border-[#dadfe5]">
          <svg viewBox="0 0 12 12" className="size-3" fill="none" strokeWidth="3.500">
            <path d="M2.200 9V5.800a3.800 3.800 0 0 1 7.600 0V9" stroke="#e8365d" />
            <path d="M2.200 9v3M9.800 9v3" stroke="#c3bccf" />
          </svg>
          Snap: ปิด
        </button>
        <span className="ml-2.5 flex h-[17px] items-center rounded-full bg-[#e87a00] px-[7px] text-[11px] font-bold text-white">BETA</span>
        <span className="ml-1.5 w-[248px] truncate font-medium text-[#b35c00]">ผลลัพธ์อาจคลาดเคลื่อน โปรดสำรองไฟล์และตรวจสอบก่อนใช้งาน</span>
        <span className="ml-2.5 flex h-[22px] items-center rounded-full border border-[#7fc29b] bg-[#e0f2e7] px-1.5 text-[#1b2230]">Full · Dongle</span>
        <span className="ml-2 text-[#7d8590]">Core 3.0.3.0</span>
      </footer>
    </main>
  );
}
